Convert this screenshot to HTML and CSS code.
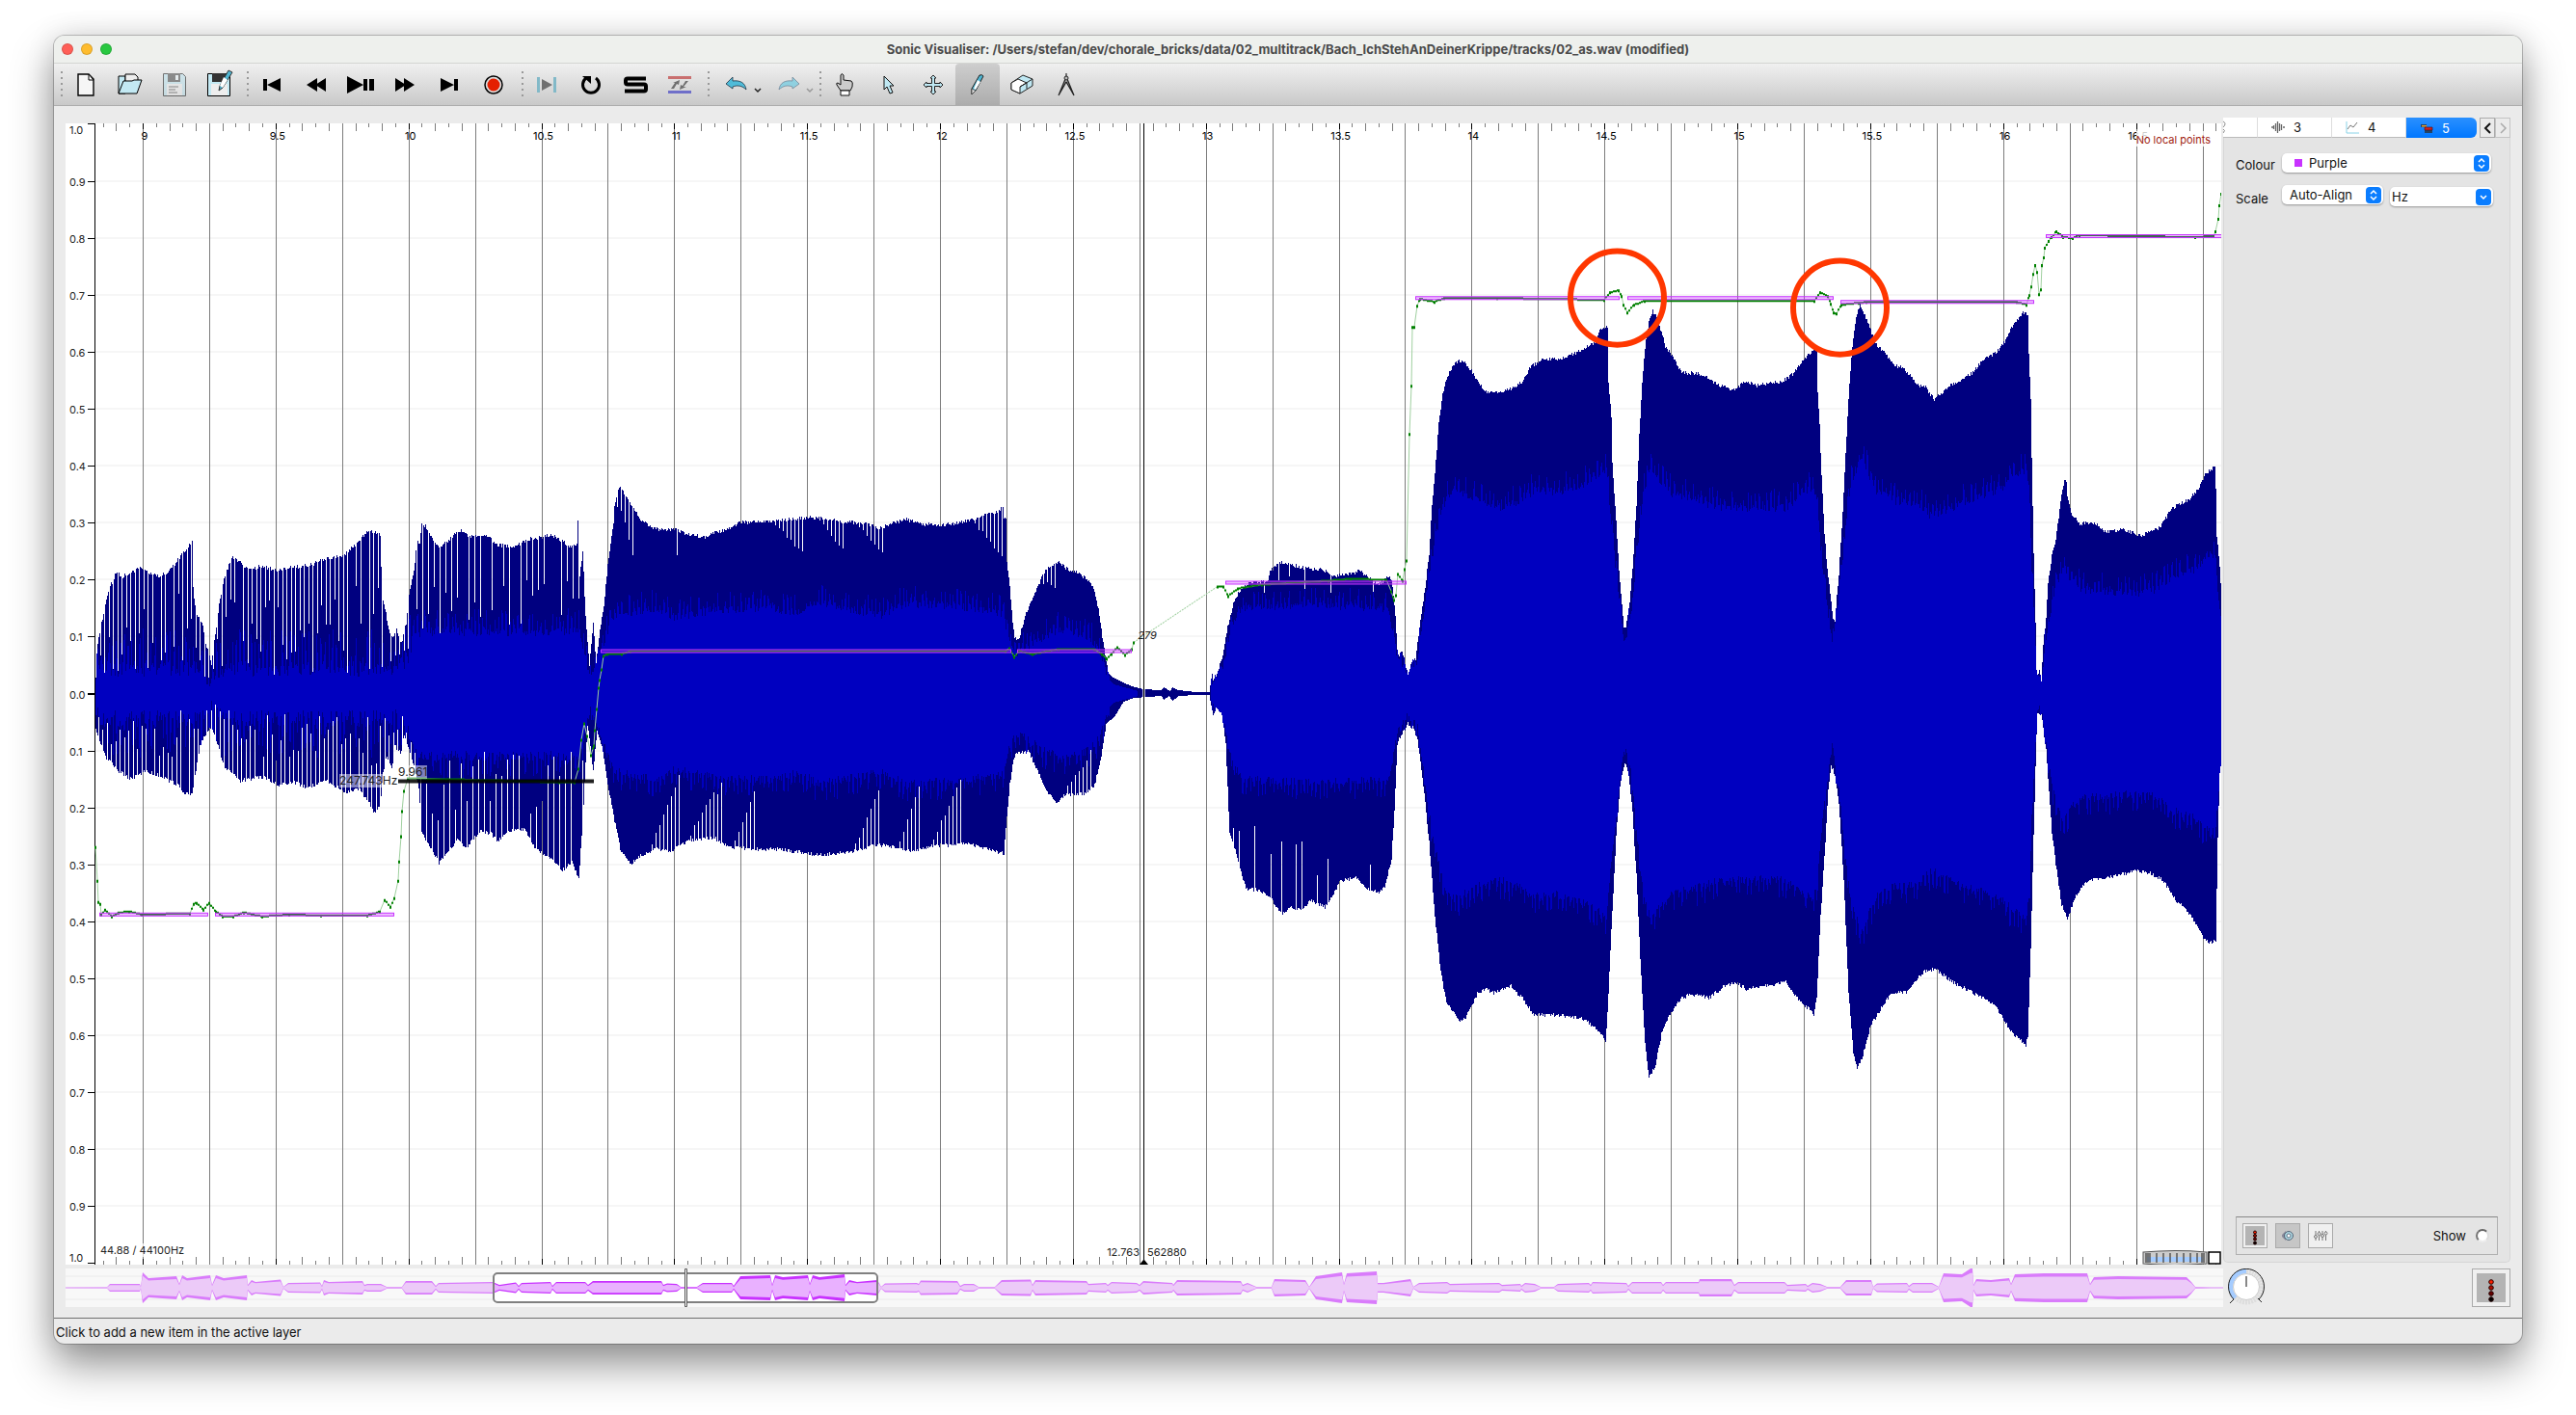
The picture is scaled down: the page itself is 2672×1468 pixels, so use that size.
FILE: index.html
```html
<!DOCTYPE html>
<html lang="en">
<head>
<meta charset="utf-8">
<title>Sonic Visualiser</title>
<link rel="stylesheet" href="styles.css">
</head>
<body>
<div class="window">
  <header class="titlebar">
    <div class="lights"><i class="light close"></i><i class="light minimise"></i><i class="light maximise"></i></div>
    <h1 class="title">Sonic Visualiser: /Users/stefan/dev/chorale_bricks/data/02_multitrack/Bach_IchStehAnDeinerKrippe/tracks/02_as.wav (modified)</h1>
  </header>

  <nav class="toolbar" aria-label="Tools">
    <div class="group">
      <button class="tool" aria-label="New session"><svg viewBox="0 0 28 28"><path d="M6 3h11l5 5v17H6z" fill="#f6f6f6" stroke="#000" stroke-width="1.4"/><path d="M17 3v6h5z" fill="#fff" stroke="#000"/></svg></button>
      <button class="tool" aria-label="Open"><svg viewBox="0 0 28 28"><path d="M2 5h7v18H2z" fill="#c3e9f3" stroke="#000"/><path d="M9 3h10l3 3v8H9z" fill="#eee" stroke="#000"/><path d="M2 23l5-13h9l2-1h8l-5 14z" fill="#c3e9f3" stroke="#000"/></svg></button>
      <button class="tool" aria-label="Save" disabled><svg viewBox="0 0 28 28" opacity=".5"><path d="M2.500 2.500h20l3 3v20h-23z" fill="#b8e2ee" stroke="#000"/><path d="M7 2h13v9H7z" fill="#333"/><path d="M15 4h3v5h-3z" fill="#e8f4f8"/><path d="M6 13h16v12H6z" fill="#eee"/><path d="M8 16h10M8 19h7M8 22h9" stroke="#333"/></svg></button>
      <button class="tool" aria-label="Save as"><svg viewBox="0 0 28 28" overflow="visible"><path d="M2.500 2.500h23v23h-23z" fill="#c3e9f3" stroke="#000"/><path d="M7 2h14v9H7z" fill="#333"/><path d="M6 13h17v12H6z" fill="#eee"/><path d="M24-1l4 2-10 16-4 3 1-5z" fill="#4fb5d2" stroke="#333"/><path d="M19 6l4 3-5 8-3-2z" fill="#fff"/></svg></button>
    </div>
    <i class="grip"></i>
    <div class="group">
      <button class="tool" aria-label="Rewind to start"><svg viewBox="0 0 28 28"><path d="M5 8h4v12H5zM9 14l14-7v14z"/></svg></button>
      <button class="tool" aria-label="Rewind"><svg viewBox="0 0 28 28"><path d="M4 14l11-7v14zM13 14l11-7v14z"/></svg></button>
      <button class="tool" aria-label="Play or pause"><svg viewBox="0 0 28 28"><path d="M0 5l17 9-17 9zM17 8h4v12h-4zM23 8h5v12h-5z"/></svg></button>
      <button class="tool" aria-label="Fast forward"><svg viewBox="0 0 28 28"><path d="M4 7l11 7-11 7zM13 7l11 7-11 7z"/></svg></button>
      <button class="tool" aria-label="Fast forward to end"><svg viewBox="0 0 28 28"><path d="M5 7l14 7-14 7zM19 8h4v12h-4z"/></svg></button>
      <button class="tool" aria-label="Record"><svg viewBox="0 0 28 28"><circle cx="14" cy="14" r="9" fill="#ddd" stroke="#000" stroke-width="1.500"/><circle cx="14" cy="14" r="6.500" fill="#e41f00"/></svg></button>
    </div>
    <i class="grip"></i>
    <div class="group">
      <button class="tool" aria-label="Constrain playback to selection"><svg viewBox="0 0 28 28"><path d="M4 6h3v16H4zM21 6h3v16h-3z" fill="#82b9c8"/><path d="M9 8l11 6-11 6z" fill="#707070"/></svg></button>
      <button class="tool" aria-label="Loop playback"><svg viewBox="0 0 28 28"><path d="M19 7a8.500 8.500 0 1 1-10 0" fill="none" stroke="#000" stroke-width="3"/><path d="M5 5h9v8z"/></svg></button>
      <button class="tool" aria-label="Solo current pane"><svg viewBox="0 0 28 28"><path d="M25 7.500H6q-2 0-2 2v2q0 2 2 2h17q2 0 2 2v3q0 2-2 2H3" fill="none" stroke="#000" stroke-width="4"/></svg></button>
      <button class="tool" aria-label="Align file timelines"><svg viewBox="0 0 28 28"><path d="M2 5h24v3H2z" fill="#c96f6f"/><path d="M2 20h24v3H2z" fill="#6f6fc9"/><path d="M5 18l4-6H7l7-3-1 5-2-1-3 5zM23 10l-5 6h3l-7 3 1-5 2 1 3-5z" fill="#707070"/></svg></button>
    </div>
    <i class="grip"></i>
    <div class="group wide">
      <button class="tool" aria-label="Undo"><svg viewBox="0 0 28 28"><path d="M3 13l7-7v4c8-1 13 2 14 9-4-4-9-5-14-3v2z" fill="#4fbbd8" stroke="#234" stroke-width=".8"/></svg></button>
      <svg class="menu-arrow" viewBox="0 0 8 6"><path d="M1 1l3 3 3-3" fill="none" stroke="#222" stroke-width="1.500"/></svg>
      <button class="tool" aria-label="Redo" disabled><svg viewBox="0 0 28 28"><path d="M25 13l-7-7v4C10 9 5 12 4 19c4-4 9-5 14-3v2z" fill="#8fd0e0" stroke="#789" stroke-width=".8"/></svg></button>
      <svg class="menu-arrow" viewBox="0 0 8 6"><path d="M1 1l3 3 3-3" fill="none" stroke="#999" stroke-width="1.500"/></svg>
    </div>
    <i class="grip"></i>
    <div class="group">
      <button class="tool" aria-label="Navigate"><svg viewBox="0 0 28 28"><path d="M10 20l-4-6q-1-2 1-2l3 2V4q1-3 3 0v5l8 1q2 1 1 6l-2 4z" fill="#ccc" stroke="#111"/><path d="M10 20h9v5h-9z" fill="#fff" stroke="#111"/></svg></button>
      <button class="tool" aria-label="Select"><svg viewBox="0 0 28 28"><path d="M9 5l10 10h-4l3 7-3 1-3-7-3 3z" fill="#bfe8f3" stroke="#111"/></svg></button>
      <button class="tool" aria-label="Edit"><svg viewBox="0 0 28 28"><path d="M14 4l3 3h-1.500v5.500H21V11l3 3-3 3v-1.500h-5.500V21H17l-3 3-3-3h1.500v-5.500H7V17l-3-3 3-3v1.500h5.500V7H11z" fill="#bfe8f3" stroke="#222"/></svg></button>
      <button class="tool active" aria-label="Draw" aria-pressed="true"><svg viewBox="0 0 28 28"><path d="M16 4q3-1 4 1l-8 15-4 4V18z" fill="#4fb5d2" stroke="#222"/><path d="M14 9l3 2-5 8-2-1z" fill="#fff"/><path d="M8 18l4 2-4 4z" fill="#ddd" stroke="#333" stroke-width=".7"/></svg></button>
      <button class="tool" aria-label="Erase"><svg viewBox="0 0 28 28"><path d="M3 12l12-8 10 4v7l-13 8-9-4z" fill="#bfe8f3" stroke="#222"/><path d="M3 12l7-4 9 4-7 4v7l-9-4z" fill="#fff" stroke="#222"/><path d="M12 16l13-8M19 12v6" fill="none" stroke="#222"/></svg></button>
      <button class="tool" aria-label="Measure"><svg viewBox="0 0 28 28"><path d="M14 2v4M13 8L6 25l8-14M15 8l7 17-8-14" fill="#999" stroke="#222" stroke-width="1.200"/><circle cx="14" cy="7" r="2" fill="#bbb" stroke="#222"/></svg></button>
    </div>
  </nav>

  <main class="content">
    <section class="pane" aria-label="Waveform pane">
      <svg id="plot" class="plot" viewBox="68 128 2236 1183" preserveAspectRatio="none"></svg>
      <div id="labels"></div>
      <span class="label rate">44.88 / 44100Hz</span>
      <span class="label local">No local points</span>
    </section>

    <aside class="side">
      <div class="tabs" role="tablist">
        <button class="tab partial" role="tab" aria-label="Layer 2"><svg viewBox="0 0 4 14"><path d="M0 1q4 2 0 6M0 9q3 1 0 4" fill="none" stroke="#888"/></svg></button>
        <button class="tab" role="tab"><svg viewBox="0 0 14 14"><path d="M0 7h2M2.500 5v4M4.500 3v8M6.500 1v12M8.500 3v8M10.500 4v6M12 7h2" stroke="#666" stroke-width="1.300"/></svg>3</button>
        <button class="tab" role="tab"><svg viewBox="0 0 14 14"><path d="M1 1v12h13" fill="none" stroke="#8ad3e8"/><path d="M2 9l3-4 3 2 4-5" fill="none" stroke="#777"/></svg>4</button>
        <button class="tab selected" role="tab" aria-selected="true"><svg viewBox="0 0 14 14"><path d="M1 3h6v3H1zM5 9h8v3H5z" fill="#246"/><path d="M2 4h5v1.500H2z" fill="#e9a030"/><path d="M5 6h8v3H5z" fill="#d02020" stroke="#411" stroke-width=".6"/></svg>5</button>
        <button class="scroll first" aria-label="Previous tab"><svg viewBox="0 0 10 14"><path d="M8 2L3 7l5 5" fill="none" stroke="#111" stroke-width="2"/></svg></button>
        <button class="scroll" aria-label="Next tab" disabled><svg viewBox="0 0 10 14"><path d="M3 2l5 5-5 5" fill="none" stroke="#aaa" stroke-width="1.500"/></svg></button>
      </div>
      <div class="panel">
        <form class="properties">
          <label for="colour">Colour</label>
          <div class="field swatched"><i class="swatch"></i>
            <select id="colour"><option>Purple</option></select>
            <svg class="stepper" viewBox="0 0 16 17"><rect width="16" height="17" rx="4"/><path d="M5 7l3-3 3 3M5 10l3 3 3-3"/></svg></div>
          <label for="scale">Scale</label>
          <div class="pair">
            <div class="field align"><select id="scale"><option>Auto-Align</option></select>
              <svg class="stepper" viewBox="0 0 16 17"><rect width="16" height="17" rx="4"/><path d="M5 7l3-3 3 3M5 10l3 3 3-3"/></svg></div>
            <div class="field unit"><select id="unit" aria-label="Unit"><option>Hz</option></select>
              <svg class="stepper" viewBox="0 0 16 17"><rect width="16" height="17" rx="4"/><path d="M5 7l3 3 3-3"/></svg></div>
          </div>
        </form>
        <div class="playback">
          <button class="mini" aria-label="Level"><svg viewBox="0 0 20 20"><path d="M0 0h20v20H0z" fill="#b4b4b4"/><g stroke="#200"><circle cx="10" cy="6.500" r="1.500" fill="#f20"/><circle cx="10" cy="10" r="1.500" fill="#b01000"/><circle cx="10" cy="13.500" r="1.500" fill="#600"/><circle cx="10" cy="17.500" r="1.500"/></g></svg></button>
          <button class="mini pressed" aria-label="Play sound"><svg viewBox="0 0 20 20"><path d="M8 5l-4 4v2l4 4z" fill="#889"/><circle cx="11" cy="10" r="4.500" fill="#a9d3df" stroke="#567"/><circle cx="11" cy="10" r="2" fill="#fff" stroke="#678"/></svg></button>
          <button class="mini" aria-label="Sound settings"><svg viewBox="0 0 20 20"><path d="M5 5v10M8.500 5v10M12 5v10M15.500 5v10" stroke="#777"/><g fill="#eee" stroke="#777"><circle cx="5" cy="11" r="1.500"/><circle cx="8.500" cy="8" r="1.500"/><circle cx="12" cy="10" r="1.500"/><circle cx="15.500" cy="7.500" r="1.500"/></g></svg></button>
          <label class="show">Show <input type="radio" name="show"></label>
        </div>
      </div>
    </aside>

    <section class="overview" aria-label="Overview">
      <svg id="overview" class="plot" viewBox="68 1315 2238 40" preserveAspectRatio="none"></svg>
    </section>
    <div class="controls">
      <svg class="dial" viewBox="0 0 40 40" role="img" aria-label="Playback speed"><circle cx="20" cy="19" r="16" fill="none" stroke="#ddd" stroke-width="5" stroke-dasharray="2 1"/><path d="M8.500 30.500A16.300 16.300 0 0 1 20 2.700" fill="none" stroke="#a5ccff" stroke-width="5"/><path d="M7 32A18.500 18.500 0 1 1 33 32M7 32l-4 4M32 31l4 4" fill="none" stroke="#222"/><circle cx="20" cy="19" r="13.500" fill="#fff" stroke="#ccc"/><path d="M20 8v11" stroke="#888" stroke-width="2"/></svg>
      <button class="level" aria-label="Master level"><svg viewBox="0 0 30 30"><path d="M0 0h30v30H0z" fill="#b4b4b4"/><g stroke="#200"><circle cx="15" cy="9" r="2.300" fill="#f20"/><circle cx="15" cy="15" r="2.300" fill="#b01000"/><circle cx="15" cy="21" r="2.300" fill="#600"/><circle cx="15" cy="27" r="2.300"/></g></svg></button>
    </div>
  </main>
  <footer class="status">Click to add a new item in the active layer</footer>
</div>
<script src="plot.js"></script>
</body>
</html>
```
FILE: styles.css
```css
* { box-sizing: border-box; }
body {
  margin: 0;
  min-height: 100vh;
  padding: 37px 56px 74px;
  display: flex;
  background: #fff;
  color: #111;
  font: 13px/16px Inter, "Liberation Sans", sans-serif;
}
button, select, input { font: inherit; color: inherit; margin: 0; }
button { padding: 0; border: 0; background: none; }
svg { display: block; }

.window {
  flex: 1;
  display: flex;
  flex-direction: column;
  min-width: 0;
  background: #ebebeb;
  border-radius: 11px;
  overflow: hidden;
  box-shadow: 0 0 0 1px rgba(0,0,0,.22), 0 22px 44px rgba(0,0,0,.42), 0 0 30px rgba(0,0,0,.12);
}
.titlebar {
  position: relative;
  height: 29px;
  display: flex;
  align-items: center;
  justify-content: center;
  background: #eef0ed;
  border-bottom: 1px solid #d3d5d2;
}
.lights { position: absolute; left: 8px; display: flex; gap: 8px; }
.light { width: 12px; height: 12px; border-radius: 50%; border: 1px solid rgba(0,0,0,.14); }
.close { background: #ff5f57; }
.minimise { background: #febc2e; }
.maximise { background: #28c840; }
.title { margin: 0; font-size: 13px; font-weight: 700; color: #4a4a4a; }

.toolbar {
  height: 44px;
  padding-left: 10px;
  display: flex;
  background: linear-gradient(#f0f0f0, #c9c9c9);
  border-bottom: 1px solid #adadad;
  position: relative;
}
.toolbar::before, .grip {
  content: "";
  width: 2px;
  height: 28px;
  align-self: center;
  background: repeating-linear-gradient(#999 0 2px, transparent 2px 6px);
}
.toolbar::before { position: absolute; left: 7px; top: 8px; }
.grip { margin: 0 1px 0 6px; }
.group { display: flex; }
.tool { width: 46px; display: grid; place-items: center; }
.tool svg { width: 28px; height: 28px; }
.tool.active { background: rgba(0,0,0,.14); border-radius: 4px 4px 0 0; }
.wide { padding: 0 0 0 9px; }
.wide .tool { width: 36px; }
.menu-arrow { width: 8px; height: 6px; margin: 25px 0 0; }
.menu-arrow + .tool { margin-left: 10px; }

.content {
  flex: 1;
  min-height: 0;
  display: grid;
  grid-template: minmax(0, 1fr) 40px / minmax(0, 1fr) 298px;
  row-gap: 4px;
  padding: 12px 12px 11px;
}
.pane { position: relative; margin: 6px 2px 0 0; background: #fff; overflow: hidden; }
.plot { width: 100%; height: 100%; }
.label { position: absolute; font-size: 11px; line-height: 14px; color: #222; white-space: nowrap; }
.axis { left: 4px; transform: translateY(-50%); }
.time { top: 6px; transform: translateX(-50%); color: #000; padding-left: 4px; }
.rate { left: 36px; bottom: 8px; background: rgba(255,255,255,.7); }
.local { top: 8px; right: 8px; padding: 2px 3px 0 0; color: #a01c10; background: rgba(255,255,255,.8); }
.note { background: rgba(255,255,255,.5); font-size: 12px; }
.reading { font-style: italic; transform: translate(-50%, -50%); }
.frame { bottom: 6px; }
.frame.left { transform: translateX(-100%); }

.side { display: flex; flex-direction: column; margin-bottom: 2px; }
.tabs { display: flex; height: 21px; }
.tab {
  width: 77px;
  display: flex;
  align-items: center;
  gap: 9px;
  padding-left: 14px;
  background: #fff;
  border-right: 1px solid #ddd;
  border-bottom: 1px solid #bbb;
}
.tab svg { width: 14px; height: 14px; }
.tab.partial { width: 36px; padding: 0; }
.tab.partial svg { width: 4px; }
.tab.selected { width: 73px; color: #fff; background: linear-gradient(#2a90ff, #0077ff); border: 0; border-radius: 0 6px 6px 0; }
.scroll { width: 16px; border: 1px solid #c4c4c4; display: grid; place-items: center; }
.scroll.first { margin-left: auto; border-color: #aaa; }
.scroll svg { width: 10px; height: 14px; }
.panel {
  flex: 1;
  display: flex;
  flex-direction: column;
  justify-content: space-between;
  padding: 15px 12px 7px;
  background: #e4e4e4;
  border: 1px solid #d6d6d6;
  border-top: 0;
  border-radius: 0 0 5px 5px;
}
.properties { display: grid; grid-template-columns: 40px 219px; gap: 13px 8px; align-items: center; }
.properties label { padding-top: 5px; }
.pair { display: flex; gap: 7px; }
.field { position: relative; height: 20px; background: #fff; border-radius: 5px; box-shadow: 0 1px 2px rgba(0,0,0,.35); }
.field select { width: 100%; height: 100%; padding: 0 8px; border: 0; background: none; appearance: none; display: block; }
.swatched { width: 217px; }
.swatched select { padding-left: 28px; }
.swatch { position: absolute; left: 13px; top: 6px; width: 8px; height: 8px; background: #c832ff; }
.align { width: 105px; }
.unit { width: 107px; margin-top: 2px; }
.unit select { padding-left: 2px; }
.stepper { position: absolute; right: 2px; top: 2px; width: 16px; height: 17px; pointer-events: none; }
.stepper rect { fill: #0a7dff; }
.stepper path { fill: none; stroke: #fff; stroke-width: 1.5; }
.playback {
  display: flex;
  align-items: center;
  gap: 8px;
  height: 40px;
  padding: 0 8px 0 6px;
  border: 1px solid #b0b0b0;
  border-top-color: #888;
}
.mini { width: 26px; height: 26px; display: grid; place-items: center; border: 1px solid #aaa; background: #f0f0f0; }
.mini svg { width: 20px; height: 20px; }
.mini.pressed { background: #c6c6c6; }
.show { margin-left: auto; display: flex; align-items: center; gap: 10px; }
.show input { appearance: none; width: 14px; height: 14px; border-radius: 50%; background: #fff; border: 2px solid; border-color: #666 #ddd #eee #777; }
.overview { background: #f8f8f8; }
.controls { display: flex; justify-content: space-between; padding-left: 4px; }
.dial { width: 40px; height: 40px; }
.level { width: 40px; height: 40px; display: grid; place-items: center; border: 1px solid #aaa; background: #f0f0f0; }
.level svg { width: 30px; height: 30px; }
.status { height: 27px; padding: 6px 2px 0; border-top: 1px solid #707070; line-height: 16px; }
```
FILE: plot.js
```js
const LEFT = 98, RIGHT = 2304, TOP = 128, BOTTOM = 1311, ZERO = 719;

// Each list is x,y pairs along one edge of the waveform.
const outerTop = [98,695,102,660,112,613,121,592,125,600,129,596,145,590,164,598,175,593,190,573,199,561,200,610,203,637,210,647,212,668,215,672,219,688,221,672,227,627,232,600,240,578,249,583,257,592,270,587,286,592,303,588,320,587,338,579,355,577,368,565,379,553,386,551,394,555,396,620,400,637,404,658,408,660,411,654,416,667,421,647,424,617,429,593,432,562,435,562,437,542,442,547,448,560,455,567,463,563,470,555,478,550,487,557,507,556,513,565,533,567,550,559,572,555,583,561,591,568,598,563,599,539,601,597,604,572,607,640,611,690,615,647,618,688,622,655,626,627,630,587,635,550,637,525,642,505,648,513,654,523,663,538,671,545,684,550,700,549,715,555,732,557,740,553,754,549,768,542,800,541,823,538,846,537,873,541,896,543,914,548,926,542,940,539,958,544,972,545,986,543,1006,540,1025,533,1036,530,1040,524,1041,538,1043,537,1044,583,1047,607,1049,635,1052,662,1056,665,1059,653,1064,637,1071,620,1080,598,1089,587,1097,583,1107,590,1119,595,1129,602,1135,613,1139,632,1144,667,1149,697,1153,702,1162,707,1174,712,1185,715,1204,716,1207,713,1213,717,1216,713,1222,716,1240,718,1254,718,1257,697,1258,705,1263,697,1268,680,1273,650,1280,623,1286,612,1296,605,1314,603,1317,593,1325,585,1332,583,1346,588,1376,592,1383,597,1401,595,1410,592,1417,598,1429,607,1438,600,1443,600,1447,637,1449,674,1451,681,1454,675,1457,688,1460,699,1465,684,1468,684,1471,659,1475,631,1478,609,1482,574,1485,524,1489,479,1492,438,1496,409,1499,395,1503,386,1509,377,1513,374,1519,377,1526,384,1534,399,1542,406,1555,407,1568,403,1580,395,1586,382,1597,374,1618,372,1637,365,1651,357,1654,356,1660,341,1666,338,1667,340,1668,397,1671,431,1672,481,1676,541,1679,591,1681,616,1684,650,1686,650,1690,624,1694,577,1697,524,1700,452,1703,395,1707,352,1710,334,1714,323,1719,331,1723,345,1727,359,1737,374,1744,387,1762,387,1775,395,1783,400,1800,405,1808,395,1821,400,1848,396,1859,388,1867,377,1876,368,1881,363,1884,365,1885,406,1887,441,1889,495,1892,552,1895,591,1901,643,1903,643,1907,595,1911,531,1914,470,1917,413,1921,359,1925,327,1929,316,1936,331,1945,357,1955,365,1964,379,1974,382,1989,399,1997,402,2006,415,2020,402,2033,395,2047,386,2055,375,2070,366,2078,356,2083,345,2093,331,2099,324,2103,328,2104,366,2106,413,2107,474,2109,574,2111,645,2112,695,2113,702,2115,697,2117,706,2119,670,2122,641,2124,606,2128,577,2132,559,2135,538,2138,513,2141,499,2143,500,2144,515,2148,532,2157,543,2173,543,2185,552,2202,549,2220,556,2240,547,2253,527,2270,518,2280,506,2288,491,2297,484,2298,506,2299,556,2302,588,2304,620];
const outerBottom = [98,752,103,767,110,787,114,788,121,798,136,807,151,798,168,805,186,815,190,821,199,823,203,798,207,773,212,762,218,753,223,765,233,795,249,809,272,805,288,813,303,810,318,816,338,809,359,821,372,817,381,830,388,842,394,835,397,800,401,783,406,797,409,773,415,780,419,763,422,770,429,793,434,817,437,863,444,873,455,895,465,882,474,870,483,878,498,862,509,863,515,872,531,860,544,860,554,878,570,890,583,902,593,893,600,912,602,880,605,833,607,790,609,750,615,798,619,757,624,773,630,813,637,850,643,880,654,895,663,887,680,880,697,881,715,871,740,868,754,877,777,880,809,880,848,886,882,883,910,875,947,882,965,877,1002,874,1027,881,1041,885,1043,857,1047,813,1051,785,1055,780,1067,779,1075,797,1084,817,1095,832,1107,823,1126,823,1135,813,1142,785,1147,750,1156,742,1165,727,1176,723,1204,721,1207,725,1212,721,1216,726,1222,721,1240,720,1254,720,1258,743,1261,733,1267,740,1271,770,1275,863,1280,877,1286,900,1292,922,1302,922,1314,927,1321,935,1329,948,1339,940,1348,943,1360,933,1374,940,1383,927,1390,912,1408,910,1415,920,1429,925,1436,920,1443,890,1446,840,1449,770,1456,757,1460,750,1466,755,1470,767,1476,813,1482,873,1488,950,1494,1007,1500,1040,1514,1058,1520,1055,1532,1030,1541,1025,1548,1029,1567,1022,1579,1035,1591,1052,1611,1052,1641,1056,1655,1065,1665,1079,1667,1050,1671,963,1676,867,1680,813,1685,790,1689,803,1693,843,1697,907,1702,1013,1706,1083,1710,1115,1716,1107,1723,1072,1731,1053,1743,1035,1752,1031,1773,1034,1787,1023,1799,1018,1811,1025,1852,1018,1864,1035,1881,1051,1884,1033,1888,950,1893,873,1896,817,1899,793,1903,803,1907,833,1912,910,1917,1027,1922,1090,1926,1106,1931,1097,1940,1063,1954,1040,1963,1029,1978,1028,1995,1007,2007,1004,2028,1020,2045,1028,2069,1042,2086,1070,2101,1083,2103,1073,2106,983,2109,867,2112,760,2113,740,2117,740,2122,777,2128,863,2133,903,2138,937,2144,953,2152,930,2163,913,2192,908,2216,902,2230,905,2243,912,2257,933,2271,947,2285,972,2292,977,2298,975,2300,867,2302,803,2304,783];
// The mean-level band is symmetrical about zero, so one edge is enough.
const inner = [98,712,105,702,205,702,219,715,230,702,395,702,410,704,424,690,430,664,440,660,600,660,605,680,612,706,622,682,635,645,650,640,680,635,700,645,740,637,800,634,828,642,850,630,912,643,940,630,1000,634,1040,640,1044,660,1052,683,1060,680,1080,667,1100,657,1130,665,1140,680,1146,700,1155,710,1180,717,1254,718,1262,705,1270,690,1278,650,1290,635,1350,632,1440,635,1448,680,1458,700,1470,690,1477,638,1482,599,1488,566,1494,538,1500,520,1509,511,1526,520,1534,525,1553,531,1576,524,1591,513,1614,515,1637,509,1652,502,1666,491,1670,538,1676,599,1685,675,1693,631,1698,574,1704,516,1712,488,1721,502,1733,516,1764,524,1783,531,1821,531,1851,531,1867,520,1880,509,1884,524,1890,595,1900,672,1907,624,1915,541,1920,506,1930,477,1936,491,1945,513,1966,524,1989,527,2003,540,2033,527,2050,520,2073,513,2087,499,2102,491,2105,527,2107,599,2111,670,2113,709,2117,707,2122,670,2128,631,2132,613,2140,591,2148,606,2160,616,2187,618,2220,620,2237,616,2253,602,2277,595,2290,581,2298,581,2300,616,2304,652];
const pitch = [99,878,101,913,102,935,104,937,105,948,109,943,116,950,123,946,134,945,147,948,197,947,201,937,204,936,211,943,217,936,224,945,231,950,242,950,253,946,272,950,300,948,333,949,381,949,394,945,399,933,405,940,409,931,413,913,414,893,416,867,417,841,419,820,423,807,463,808,580,811,596,811,600,797,603,767,606,750,609,763,613,783,616,773,617,757,619,735,621,713,622,705,624,694,626,680,630,678,645,678,654,675,1043,675,1047,672,1052,681,1057,675,1071,678,1098,673,1135,673,1143,678,1148,683,1153,678,1159,671,1167,679,1174,673,1176,666,null,null,1263,608,1269,608,1274,618,1284,610,1309,606,1378,602,1401,600,1438,601,1443,613,1446,622,1448,617,1450,595,1455,602,1457,590,1459,581,1462,450,1464,400,1465,339,1467,339,1470,317,1473,310,1488,313,1498,309,1553,309,1664,311,1670,303,1679,301,1682,307,1684,316,1688,324,1695,316,1706,312,1882,312,1888,303,1896,307,1899,315,1902,324,1905,325,1910,316,1928,314,1936,313,2092,313,2102,316,2105,306,2107,297,2109,284,2111,275,2113,282,2115,305,2117,300,2118,275,2120,267,2121,257,2125,250,2128,246,2133,240,2140,246,2150,247,2157,244,2277,246,2296,245,2298,240,2301,227,2302,213,2304,201];
const notes = [[103,216,946],[223,409,946],[623,1049,673],[1055,1174,673],[1271,1459,602],[1468,1680,307],[1688,1902,307],[1909,2110,311],[2122,2310,243]];

// Gaps between cycles: from, to, spacing, deepest cut.
const topCombs = [[804,832,3.9,36],[850,876,3.9,30],[891,916,3.9,28],[1011,1039,3.9,50],[636,656,4,48],[1078,1096,4,28]];
const bottomCombs = [[676,704,4,74],[716,748,4,62],[762,784,4,66],[887,912,4,58],[933,953,4,66],[968,996,4,68],[1103,1132,4,42]];
const topCuts = {1311:615,1326:602,1337:598,1353:618,1380:615,1424:617,702:576};
const bottomCuts = {1279:858,1285:861,1301:856,1318:885,1329:872,1344:875,1350:872,1366:907,1377:890,1421:896};

let seed = 7;
const rand = () => (seed = (seed * 16807) % 2147483647) / 2147483647;

function sampler(list) {
  let i = 0;
  return x => {
    while (i < list.length - 4 && list[i + 2] < x) i += 2;
    const t = Math.min(1, Math.max(0, (x - list[i]) / (list[i + 2] - list[i])));
    return list[i + 1] + (list[i + 3] - list[i + 1]) * t;
  };
}

function comb(x, combs) {
  for (const [a, b, step, depth] of combs) {
    if (x < a || x > b) continue;
    if ((x - a) % step < 1) return depth * (0.1 + 0.9 * (x - a) / (b - a));
  }
  return 0;
}

// Cycles resolve as gaps in the quiet notes on the left.
function isGap(x, offset) {
  if (x < 428) return ((x + offset) * 2) % 9 < 2 && rand() < 0.9;
  if (x < 606) return (x + offset) % 6 === 0 && rand() < 0.85;
  return false;
}

function waveform() {
  const top = sampler(outerTop), bottom = sampler(outerBottom), mid = sampler(inner);
  let dark = "", light = "";
  for (let x = LEFT; x < RIGHT; x++) {
    const quiet = x > 1150 && x < 1256;
    let a = top(x) + (quiet ? 0 : rand() * 4 - 2);
    let b = bottom(x) + (quiet ? 0 : rand() * 4 - 2);
    const m = mid(x);
    const grow = x < 428 ? 50 : x < 606 ? 30 : quiet ? 0 : 24;
    const tooth = rand() * (x % 4 < 2 ? 1 : 0.35) * grow;
    const tooth2 = rand() * (x % 4 < 2 ? 1 : 0.35) * grow;
    let lt = Math.max(m - tooth, a), lb = Math.min(2 * ZERO - m + tooth2, b);
    if (isGap(x, 0)) { a += Math.max(0, m - a) * (0.3 + rand() * 0.7); lt = Math.max(lt, a); }
    if (isGap(x, 2)) { b -= Math.max(0, b - 2 * ZERO + m) * (0.3 + rand() * 0.7); lb = Math.min(lb, b); }
    a += comb(x, topCombs);
    b -= comb(x, bottomCombs);
    if (topCuts[x]) a = topCuts[x];
    if (bottomCuts[x]) b = bottomCuts[x];
    a = Math.round(a); b = Math.max(a + 1, Math.round(b));
    dark += `M${x} ${a}h1V${b}h-1z`;
    if (!quiet || x < 1180) light += `M${x} ${Math.round(lt)}h1V${Math.round(lb)}h-1z`;
  }
  return `<path d="${dark}" fill="#000080"/><path d="${light}" fill="#0000c0"/>`;
}

function grid() {
  let lines = "", ticks = "", major = "", rows = "";
  for (let i = -3; i <= 160; i++) {
    const x = Math.round(148 + i * 13.784);
    if (x > RIGHT) break;
    if (i % 5 === 0) {
      lines += `M${x} ${TOP}h1V${BOTTOM}h-1z`;
      if (i % 10 === 0) major += `M${x} ${TOP}h1v6h-1zM${x} ${BOTTOM - 6}h1v6h-1z`;
    } else {
      const n = (i + 10) % 10, size = [2, 4, 6, 8].includes(n) ? 8 : 4;
      ticks += `M${x} ${TOP}h1v${size}h-1zM${x} ${BOTTOM - size}h1v${size}h-1z`;
    }
  }
  for (let k = -9; k <= 9; k++) rows += `M${LEFT} ${ZERO - 1 + k * 59}h2206v2h-2206z`;
  return `<path d="${rows}" fill="#f6f6f6"/><path d="${lines}${ticks}" fill="#7c7c7c"/><path d="${major}"/>`;
}

function axis() {
  let d = `M${LEFT} ${TOP}h1V${BOTTOM}h-1z`;
  for (let k = -10; k <= 10; k++) d += `M${LEFT - 7} ${k < -9 ? TOP : Math.min(BOTTOM - 1, ZERO + k * 59)}h7v1h-7z`;
  return `<path d="${d}"/>`;
}

function pitchTrack() {
  let d = "", dots = "", pen = "M";
  for (let i = 0; i < pitch.length; i += 2) {
    const [x, y, nx, ny] = pitch.slice(i, i + 4);
    if (x === null) { pen = "M"; continue; }
    d += `${pen}${x} ${y}`;
    pen = "L";
    dots += `M${x - 1} ${y - 1}h2v3h-2z`;
    if (nx && Math.abs(ny - y) < 12) {
      for (let t = x + 2; t < nx; t += 2) dots += `M${t - 1} ${Math.round(y + (ny - y) * (t - x) / (nx - x)) - 1}h2v2h-2z`;
    }
  }
  return `<path d="${d}" fill="none" stroke="#a0d0a0"/><path d="M1176 666L1263 608" stroke="#a0d0a0" stroke-dasharray="2 1"/><path d="${dots}" fill="#008000"/>`;
}

function noteRects() {
  let d = "";
  for (const [a, b, y] of notes) d += `M${a + .5} ${y + .5}H${b - .5}v3H${a + .5}z`;
  return `<path d="${d}" fill="#c832ff" fill-opacity=".3" stroke="#c832ff"/><path d="M413 808h203v4H413z" fill-opacity=".87"/>`;
}

function wheel() {
  let bars = "";
  for (let x = 2230; x < 2284; x += 7) bars += `M${x} 1299v10`;
  return `<path d="M2223 1298q33-3 66 0v12q-33 3-66 0z" fill="#ccc" stroke="#555"/><path d="M2227 1303h58v5h-58z" fill="#a5ccff"/><path d="${bars}M2226 1299v10M2228 1299v10M2284 1299v10M2286 1299v10" stroke="#555" stroke-width="1.500"/><path d="M2291 1298h12v12h-12z" fill="#fff" stroke="#000" stroke-width="1.500"/>`;
}

document.getElementById("plot").innerHTML =
  `<g shape-rendering="crispEdges">${grid()}${waveform()}${axis()}</g>` + pitchTrack() + noteRects() +
  `<path d="M1185 128h3v1183h-3z" fill="#fff" fill-opacity=".7"/><path d="M1186 128h1v1183h-1zM1182 1311l4-5h1l4 5z"/>` + wheel() +
  `<g fill="none" stroke="#ff3700" stroke-width="6"><circle cx="1677.500" cy="309" r="48.500"/><circle cx="1908.500" cy="319" r="48.500"/></g>`;

const labels = document.getElementById("labels");
function label(text, name, x, y) {
  const el = document.createElement("span");
  el.className = "label " + name;
  el.textContent = text;
  if (x !== null) el.style.left = (x - 68) / 22.36 + "%";
  if (y !== null) el.style.top = (y - TOP) / 11.83 + "%";
  labels.append(el);
}
for (let k = -10; k <= 10; k++) {
  const y = k === -10 ? 135 : k === 10 ? 1304 : ZERO + 1 + k * 59;
  label((Math.abs(k) / 10).toFixed(1), "axis", null, y);
}
for (let i = 0; i <= 15; i++) label(String(9 + i / 2), "time", 148 + i * 68.92 * 2, null);
label("9.961", "note", 413, 793);
label("247.743Hz", "note", 352, 802);
label("279", "reading", 1190, 659);
label("12.763", "frame left", 1182, null);
label("562880", "frame", 1190, null);

// Overview: x, half height
const shape = [68,.5,111,.7,114,4,145,4,146,1,148,16,154,10,183,12,186,4,189,13,194,10,218,13,220,3,224,13,232,10,256,13,257,3,261,8,265,6,291,8.5,294,1,299,5,332,5.5,334,2,336,8,341,6,376,7,378,3,381,4,395,4,401,1,417,1,421,7,448,7,452,2,455,5,511,6,518,3,535,5.5,538,2,541,5,571,6,573,2,577,6,607,6,610,3,615,7,686,7,688,3,692,4.5,702,4,706,1,723,1,729,5,759,5,761,2,768,12,799,13,801,3,804,13,812,11,838,13,840,4,843,13,850,11,876,14,877,3,881,8,889,6,910,8,914,1,918,4.5,951,5,953,4,955,7.5,993,7,996,2,1000,4,1010,4,1015,1,1032,1,1039,8,1069,8.5,1071,3,1074,8,1127,7,1129,4,1147,5,1149,3,1153,6,1179,5,1182,3,1186,7,1216,5,1217,3,1221,8,1287,7,1289,3,1294,5,1303,1,1319,1,1322,9,1354,8,1358,1,1365,12,1392,16,1394,4,1397,15,1428,17,1429,5,1435,5,1463,9,1466,1,1472,5,1501,6,1504,4,1555,5,1558,3,1577,4,1578,2,1582,5,1592,4,1598,1,1612,1,1616,4,1648,5,1650,3,1652,6,1687,5,1689,2,1693,6,1723,6,1725,3,1728,6,1762,6,1763,9,1796,9,1799,3,1803,6,1851,6,1854,3,1873,4,1875,2,1880,5,1888,4,1895,1,1909,1,1915,8,1941,8,1943,1,1947,4.5,1978,5,1980,2,1984,5,2004,5,2011,1,2016,15,2035,14,2044,20,2046,20,2047,3,2050,9,2065,8,2084,10,2086,4,2090,14,2120,15,2165,15,2168,4,2172,11,2197,12,2268,11,2273,6,2277,1,2293,.5,2306,.5];
function blob(shrink) {
  let up = "", down = "";
  for (let i = 0; i < shape.length; i += 2) {
    let h = shape[i + 1];
    if (shrink) h = h < 7 ? Math.max(.4, h - 1.2) : h * .76;
    up += `${shape[i]} ${1335 - h} `;
    down = `${shape[i]} ${1335 + h} ` + down;
  }
  return up + down;
}
const outside = blob(false), inside = blob(true);
document.getElementById("overview").innerHTML =
  `<path d="M68 1322h2238v2H68zM68 1334h2238v2H68zM68 1346h2238v2H68z" fill="#f1f1f1"/>
   <clipPath id="view"><rect x="511" y="1319" width="400" height="32"/></clipPath>
   <polygon points="${outside}" fill="#d97cfb"/><polygon points="${inside}" fill="#eccaf8"/>
   <g clip-path="url(#view)"><path d="M511 1319h400v32H511z" fill="#fff"/><polygon points="${outside}" fill="#c832ff"/><polygon points="${inside}" fill="#e9b1ff"/></g>
   <rect x="512" y="1320" width="398" height="30" rx="4" fill="none" stroke="#808080" stroke-width="2"/>
   <path d="M710.500 1315.500h2v39h-2z" fill="#fff" stroke="#555"/>`;
```
